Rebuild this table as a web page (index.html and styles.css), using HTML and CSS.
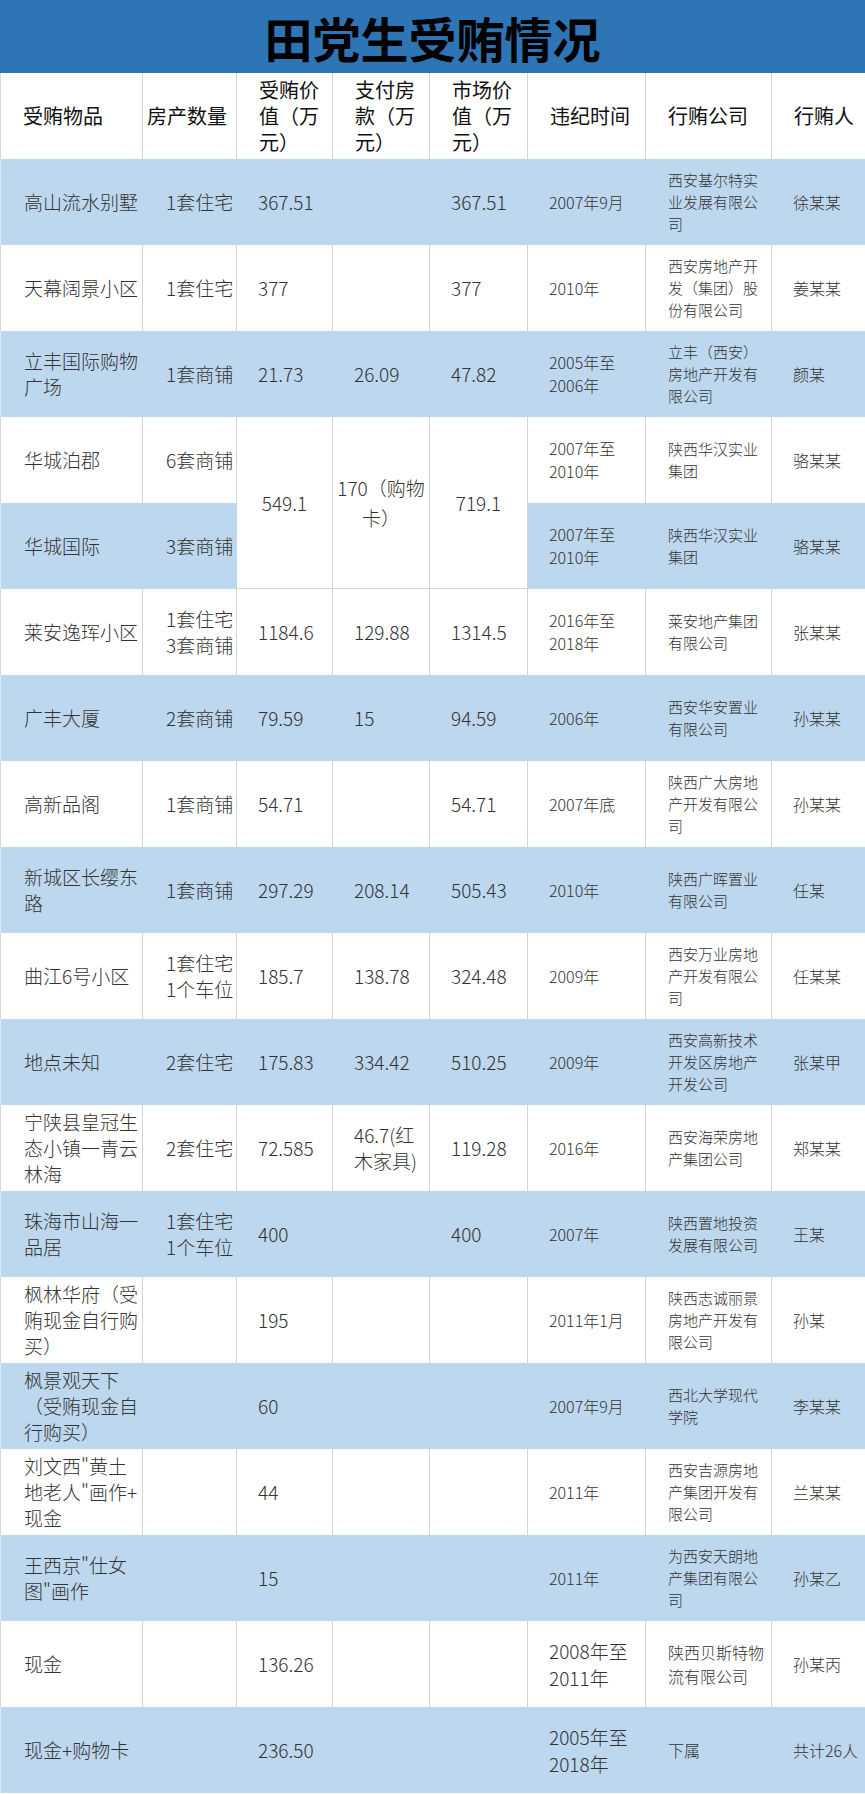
FILE: index.html
```html
<!DOCTYPE html>
<html lang="zh-CN">
<head>
<meta charset="utf-8">
<title>田党生受贿情况</title>
<link rel="stylesheet" href="styles.css">
</head>
<body>
<div class="page">
  <div class="title-bar"><h1 class="title">田党生受贿情况</h1></div>
  <table class="bribe">
    <colgroup>
      <col class="w1"><col class="w2"><col class="w3"><col class="w4"><col class="w5"><col class="w6"><col class="w7"><col class="w8">
    </colgroup>
    <thead>
      <tr>
        <th>受贿物品</th>
        <th class="tight">房产数量</th>
        <th>受贿价值（万元）</th>
        <th>支付房款（万元）</th>
        <th>市场价值（万元）</th>
        <th>违纪时间</th>
        <th>行贿公司</th>
        <th>行贿人</th>
      </tr>
    </thead>
    <tbody>
      <tr class="blue">
        <td class="item">高山流水别墅</td><td class="qty">1套住宅</td><td class="num">367.51</td><td class="num"></td><td class="num">367.51</td><td class="date">2007年9月</td><td class="co">西安基尔特实业发展有限公司</td><td class="who">徐某某</td>
      </tr>
      <tr>
        <td class="item">天幕阔景小区</td><td class="qty">1套住宅</td><td class="num">377</td><td class="num"></td><td class="num">377</td><td class="date">2010年</td><td class="co">西安房地产开发（集团）股份有限公司</td><td class="who">姜某某</td>
      </tr>
      <tr class="blue">
        <td class="item">立丰国际购物广场</td><td class="qty">1套商铺</td><td class="num">21.73</td><td class="num">26.09</td><td class="num">47.82</td><td class="date">2005年至2006年</td><td class="co">立丰（西安）房地产开发有限公司</td><td class="who">颜某</td>
      </tr>
      <tr>
        <td class="item">华城泊郡</td><td class="qty">6套商铺</td><td class="num merged" rowspan="2">549.1</td><td class="num merged" rowspan="2">170（购物卡）</td><td class="num merged" rowspan="2">719.1</td><td class="date">2007年至2010年</td><td class="co">陕西华汉实业集团</td><td class="who">骆某某</td>
      </tr>
      <tr class="blue">
        <td class="item">华城国际</td><td class="qty">3套商铺</td><td class="date">2007年至2010年</td><td class="co">陕西华汉实业集团</td><td class="who">骆某某</td>
      </tr>
      <tr>
        <td class="item">莱安逸珲小区</td><td class="qty">1套住宅<br>3套商铺</td><td class="num">1184.6</td><td class="num">129.88</td><td class="num">1314.5</td><td class="date">2016年至2018年</td><td class="co">莱安地产集团有限公司</td><td class="who">张某某</td>
      </tr>
      <tr class="blue">
        <td class="item">广丰大厦</td><td class="qty">2套商铺</td><td class="num">79.59</td><td class="num">15</td><td class="num">94.59</td><td class="date">2006年</td><td class="co">西安华安置业有限公司</td><td class="who">孙某某</td>
      </tr>
      <tr>
        <td class="item">高新品阁</td><td class="qty">1套商铺</td><td class="num">54.71</td><td class="num"></td><td class="num">54.71</td><td class="date">2007年底</td><td class="co">陕西广大房地产开发有限公司</td><td class="who">孙某某</td>
      </tr>
      <tr class="blue">
        <td class="item">新城区长缨东路</td><td class="qty">1套商铺</td><td class="num">297.29</td><td class="num">208.14</td><td class="num">505.43</td><td class="date">2010年</td><td class="co">陕西广晖置业有限公司</td><td class="who">任某</td>
      </tr>
      <tr>
        <td class="item">曲江6号小区</td><td class="qty">1套住宅<br>1个车位</td><td class="num">185.7</td><td class="num">138.78</td><td class="num">324.48</td><td class="date">2009年</td><td class="co">西安万业房地产开发有限公司</td><td class="who">任某某</td>
      </tr>
      <tr class="blue">
        <td class="item">地点未知</td><td class="qty">2套住宅</td><td class="num">175.83</td><td class="num">334.42</td><td class="num">510.25</td><td class="date">2009年</td><td class="co">西安高新技术开发区房地产开发公司</td><td class="who">张某甲</td>
      </tr>
      <tr>
        <td class="item">宁陕县皇冠生态小镇一青云林海</td><td class="qty">2套住宅</td><td class="num">72.585</td><td class="num">46.7(红木家具)</td><td class="num">119.28</td><td class="date">2016年</td><td class="co">西安海荣房地产集团公司</td><td class="who">郑某某</td>
      </tr>
      <tr class="blue">
        <td class="item">珠海市山海一品居</td><td class="qty">1套住宅<br>1个车位</td><td class="num">400</td><td class="num"></td><td class="num">400</td><td class="date">2007年</td><td class="co">陕西置地投资发展有限公司</td><td class="who">王某</td>
      </tr>
      <tr>
        <td class="item">枫林华府（受贿现金自行购买）</td><td class="qty"></td><td class="num">195</td><td class="num"></td><td class="num"></td><td class="date">2011年1月</td><td class="co">陕西志诚丽景房地产开发有限公司</td><td class="who">孙某</td>
      </tr>
      <tr class="blue">
        <td class="item">枫景观天下（受贿现金自行购买）</td><td class="qty"></td><td class="num">60</td><td class="num"></td><td class="num"></td><td class="date">2007年9月</td><td class="co">西北大学现代学院</td><td class="who">李某某</td>
      </tr>
      <tr>
        <td class="item">刘文西"黄土地老人"画作+&#8203;现金</td><td class="qty"></td><td class="num">44</td><td class="num"></td><td class="num"></td><td class="date">2011年</td><td class="co">西安吉源房地产集团开发有限公司</td><td class="who">兰某某</td>
      </tr>
      <tr class="blue">
        <td class="item">王西京"仕女图"画作</td><td class="qty"></td><td class="num">15</td><td class="num"></td><td class="num"></td><td class="date">2011年</td><td class="co">为西安天朗地产集团有限公司</td><td class="who">孙某乙</td>
      </tr>
      <tr>
        <td class="item">现金</td><td class="qty"></td><td class="num">136.26</td><td class="num"></td><td class="num"></td><td class="date big">2008年至2011年</td><td class="co mid">陕西贝斯特物流有限公司</td><td class="who">孙某丙</td>
      </tr>
      <tr class="blue">
        <td class="item">现金+购物卡</td><td class="qty"></td><td class="num">236.50</td><td class="num"></td><td class="num"></td><td class="date big">2005年至2018年</td><td class="co mid">下属</td><td class="who">共计26人</td>
      </tr>
    </tbody>
  </table>
</div>
</body>
</html>
```

FILE: styles.css
```css
html, body {
  margin: 0;
  padding: 0;
  background: #ffffff;
}

.page {
  width: 865px;
  font-family: "Noto Sans CJK SC", "Noto Sans", sans-serif;
}

.title-bar {
  height: 73px;
  background: #2e75b6;
  display: flex;
  align-items: center;
  justify-content: center;
}

.title {
  margin: 0;
  font-size: 48px;
  font-weight: 700;
  line-height: 1;
  color: #000000;
  letter-spacing: 0;
}

.bribe {
  width: 865px;
  table-layout: fixed;
  border-collapse: separate;
  border-spacing: 0;
}

.w1 { width: 143px; }
.w2 { width: 94px; }
.w3 { width: 96px; }
.w4 { width: 97px; }
.w5 { width: 98px; }
.w6 { width: 118px; }
.w7 { width: 126px; }
.w8 { width: 93px; }

.bribe tr {
  height: 86px;
}

.bribe th,
.bribe td {
  padding: 0 6px 0 22px;
  text-align: left;
  vertical-align: middle;
  border-right: 1px solid #d4d4d4;
  background: #ffffff;
}

.bribe th:first-child,
.bribe td:first-child {
  border-left: 1px solid #d8d8d8;
}

.bribe th:last-child,
.bribe td:last-child {
  border-right: none;
}

.bribe th {
  font-size: 20px;
  font-weight: 400;
  line-height: 26px;
  color: #111111;
  padding-right: 10px;
}

.bribe th.tight {
  padding-left: 4px;
  padding-right: 2px;
  white-space: nowrap;
}

.bribe td {
  font-size: 19px;
  font-weight: 300;
  line-height: 26px;
  color: #333333;
}

.bribe tr.blue td {
  background: #bdd7ee;
  border-right-color: #bdd7ee;
}

.bribe tr.blue td:first-child {
  border-left-color: #dde8f2;
}

.bribe td.item {
  padding-left: 23px;
  padding-right: 4px;
}

.bribe td.qty {
  padding-left: 23px;
  padding-right: 0;
  white-space: nowrap;
}

.bribe td.num {
  padding-left: 21px;
  padding-right: 10px;
}

.bribe td.merged {
  text-align: center;
  padding: 0 2px;
  line-height: 30px;
  background: #ffffff;
  border-bottom: 1px solid #d4d4d4;
}

.bribe td.date {
  font-size: 16px;
  line-height: 23px;
  padding-left: 21px;
  padding-right: 10px;
}

.bribe td.date.big {
  font-size: 19px;
  line-height: 27px;
}

.bribe td.co {
  font-size: 15px;
  line-height: 22px;
  padding-left: 22px;
  padding-right: 6px;
}

.bribe td.co.mid {
  font-size: 16px;
  line-height: 24px;
}

.bribe td.who {
  font-size: 16px;
  padding-left: 21px;
  padding-right: 2px;
  white-space: nowrap;
}
```
